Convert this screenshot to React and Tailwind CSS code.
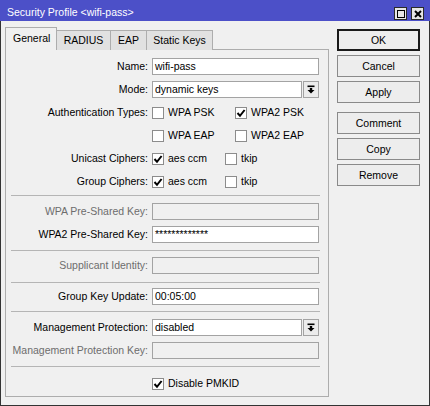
import React from 'react';

const Tick = () => (
  <svg width="10" height="10" viewBox="0 0 10 10" className="block">
    <path d="M1.5 5 L4 7.8 L8.6 2" fill="none" stroke="#000" strokeWidth="2" />
  </svg>
);

function Check({ checked, label, className = '' }) {
  return (
    <div className={`flex items-center ${className}`}>
      <div className="w-[12px] h-[12px] border border-[#8c8c8c] bg-white flex items-center justify-center">
        {checked && <Tick />}
      </div>
      <span className="ml-[4px] text-black">{label}</span>
    </div>
  );
}

function Row({ label, disabled, children }) {
  return (
    <div className="h-[23px] flex items-center">
      <div
        className={`w-[142px] text-right whitespace-nowrap ${
          disabled ? 'text-[#6d6d6d]' : 'text-black'
        }`}
      >
        {label}
      </div>
      <div className="ml-[4px] flex items-center">{children}</div>
    </div>
  );
}

function TextBox({ value, disabled, width = 'w-[167px]' }) {
  return (
    <div
      className={`${width} h-[17px] border border-[#a3a3a3] flex items-center pl-[2px] text-black whitespace-nowrap overflow-hidden ${
        disabled ? 'bg-[#f0f0f0]' : 'bg-white'
      }`}
    >
      {value}
    </div>
  );
}

function Select({ value }) {
  return (
    <div className="flex items-center">
      <TextBox value={value} width="w-[150px]" />
      <div className="ml-[1px] w-[16px] h-[17px] border border-[#a3a3a3] bg-[#ececec] flex items-center justify-center">
        <svg width="8" height="9" viewBox="0 0 8 9" className="block">
          <rect x="0.5" y="0.5" width="7" height="1.6" fill="#000" />
          <rect x="2.8" y="3" width="2.4" height="2" fill="#000" />
          <path d="M0.5 5 L7.5 5 L4 8.6 Z" fill="#000" />
        </svg>
      </div>
    </div>
  );
}

const Sep = ({ className }) => <div className={`ml-[5px] w-[309px] h-px bg-[#b5b5b5] ${className}`} />;

function Btn({ children, primary, className = '' }) {
  return (
    <div
      className={`w-[83px] h-[22px] flex items-center justify-center text-black bg-[#ededed] ${
        primary ? 'border-2 border-[#1a1a1a]' : 'border border-[#8a8a8a]'
      } ${className}`}
    >
      {children}
    </div>
  );
}

export default function App() {
  const tabs = ['RADIUS', 'EAP', 'Static Keys'];
  const tabWidths = ['w-[54px]', 'w-[36px]', 'w-[66px]'];

  return (
    <div className="w-[430px] h-[406px] flex flex-col font-['Liberation_Sans',Arial,sans-serif] text-[10.5px] leading-none select-none">
      <div className="h-[21px] bg-[#4c50c8] flex items-start justify-between pl-[7px] pr-[6px]">
        <span className="text-white pt-[7px] text-[10.5px]">Security Profile &lt;wifi-pass&gt;</span>
        <div className="flex mt-[7px]">
          <div className="w-[13px] h-[13px] border border-[#2a2a2a] bg-[#e6e6e6] flex items-center justify-center">
            <div className="w-[8px] h-[8px] border-[1.5px] border-black" />
          </div>
          <div className="ml-[4px] w-[13px] h-[13px] border border-[#2a2a2a] bg-[#e6e6e6] flex items-center justify-center">
            <svg width="8" height="8" viewBox="0 0 8 8" className="block">
              <path d="M1 1 L7 7 M7 1 L1 7" stroke="#000" strokeWidth="2" />
            </svg>
          </div>
        </div>
      </div>

      <div className="flex-1 bg-[#f0f0f0] border-x border-b border-[#333] flex pl-[4px] pt-[7px]">
        <div className="w-[324px] flex flex-col">
          <div className="flex items-end h-[22px] -mb-px relative z-10">
            <div className="w-[52px] h-[23px] border border-b-0 border-[#adadad] bg-[#f0f0f0] flex items-center pl-[7px] pb-[1px] text-black">
              General
            </div>
            {tabs.map((t, i) => (
              <div
                key={t}
                className={`${tabWidths[i]} h-[20px] border border-l-0 border-b-0 border-[#adadad] bg-[#e1e1e1] flex items-center justify-center text-black`}
              >
                {t}
              </div>
            ))}
          </div>

          <div className="border border-[#adadad] bg-[#f0f0f0] pt-[5px] pb-[1px]">
            <Row label="Name:">
              <TextBox value="wifi-pass" />
            </Row>
            <Row label="Mode:">
              <Select value="dynamic keys" />
            </Row>
            <Row label="Authentication Types:">
              <Check label="WPA PSK" className="w-[83px]" />
              <Check checked label="WPA2 PSK" />
            </Row>
            <Row label="">
              <Check label="WPA EAP" className="w-[83px]" />
              <Check label="WPA2 EAP" />
            </Row>
            <Row label="Unicast Ciphers:">
              <Check checked label="aes ccm" className="w-[73px]" />
              <Check label="tkip" />
            </Row>
            <Row label="Group Ciphers:">
              <Check checked label="aes ccm" className="w-[73px]" />
              <Check label="tkip" />
            </Row>

            <Sep className="mt-[2px] mb-[4px]" />
            <Row label="WPA Pre-Shared Key:" disabled>
              <TextBox disabled />
            </Row>
            <Row label="WPA2 Pre-Shared Key:">
              <TextBox value="*************" />
            </Row>

            <Sep className="mt-[4px] mb-[3px]" />
            <Row label="Supplicant Identity:" disabled>
              <TextBox disabled />
            </Row>

            <Sep className="mt-[5px] mb-[2px]" />
            <Row label="Group Key Update:">
              <TextBox value="00:05:00" />
            </Row>

            <Sep className="mt-[3px] mb-[4px]" />
            <Row label="Management Protection:">
              <Select value="disabled" />
            </Row>
            <Row label="Management Protection Key:" disabled>
              <TextBox disabled />
            </Row>

            <Sep className="mt-[4px] mb-[5px]" />
            <Row label="">
              <Check checked label="Disable PMKID" />
            </Row>
          </div>
        </div>

        <div className="ml-[8px] mt-[1px] flex flex-col">
          <Btn primary>OK</Btn>
          <Btn className="mt-[4px]">Cancel</Btn>
          <Btn className="mt-[4px]">Apply</Btn>
          <Btn className="mt-[9px]">Comment</Btn>
          <Btn className="mt-[4px]">Copy</Btn>
          <Btn className="mt-[4px]">Remove</Btn>
        </div>
      </div>
    </div>
  );
}
